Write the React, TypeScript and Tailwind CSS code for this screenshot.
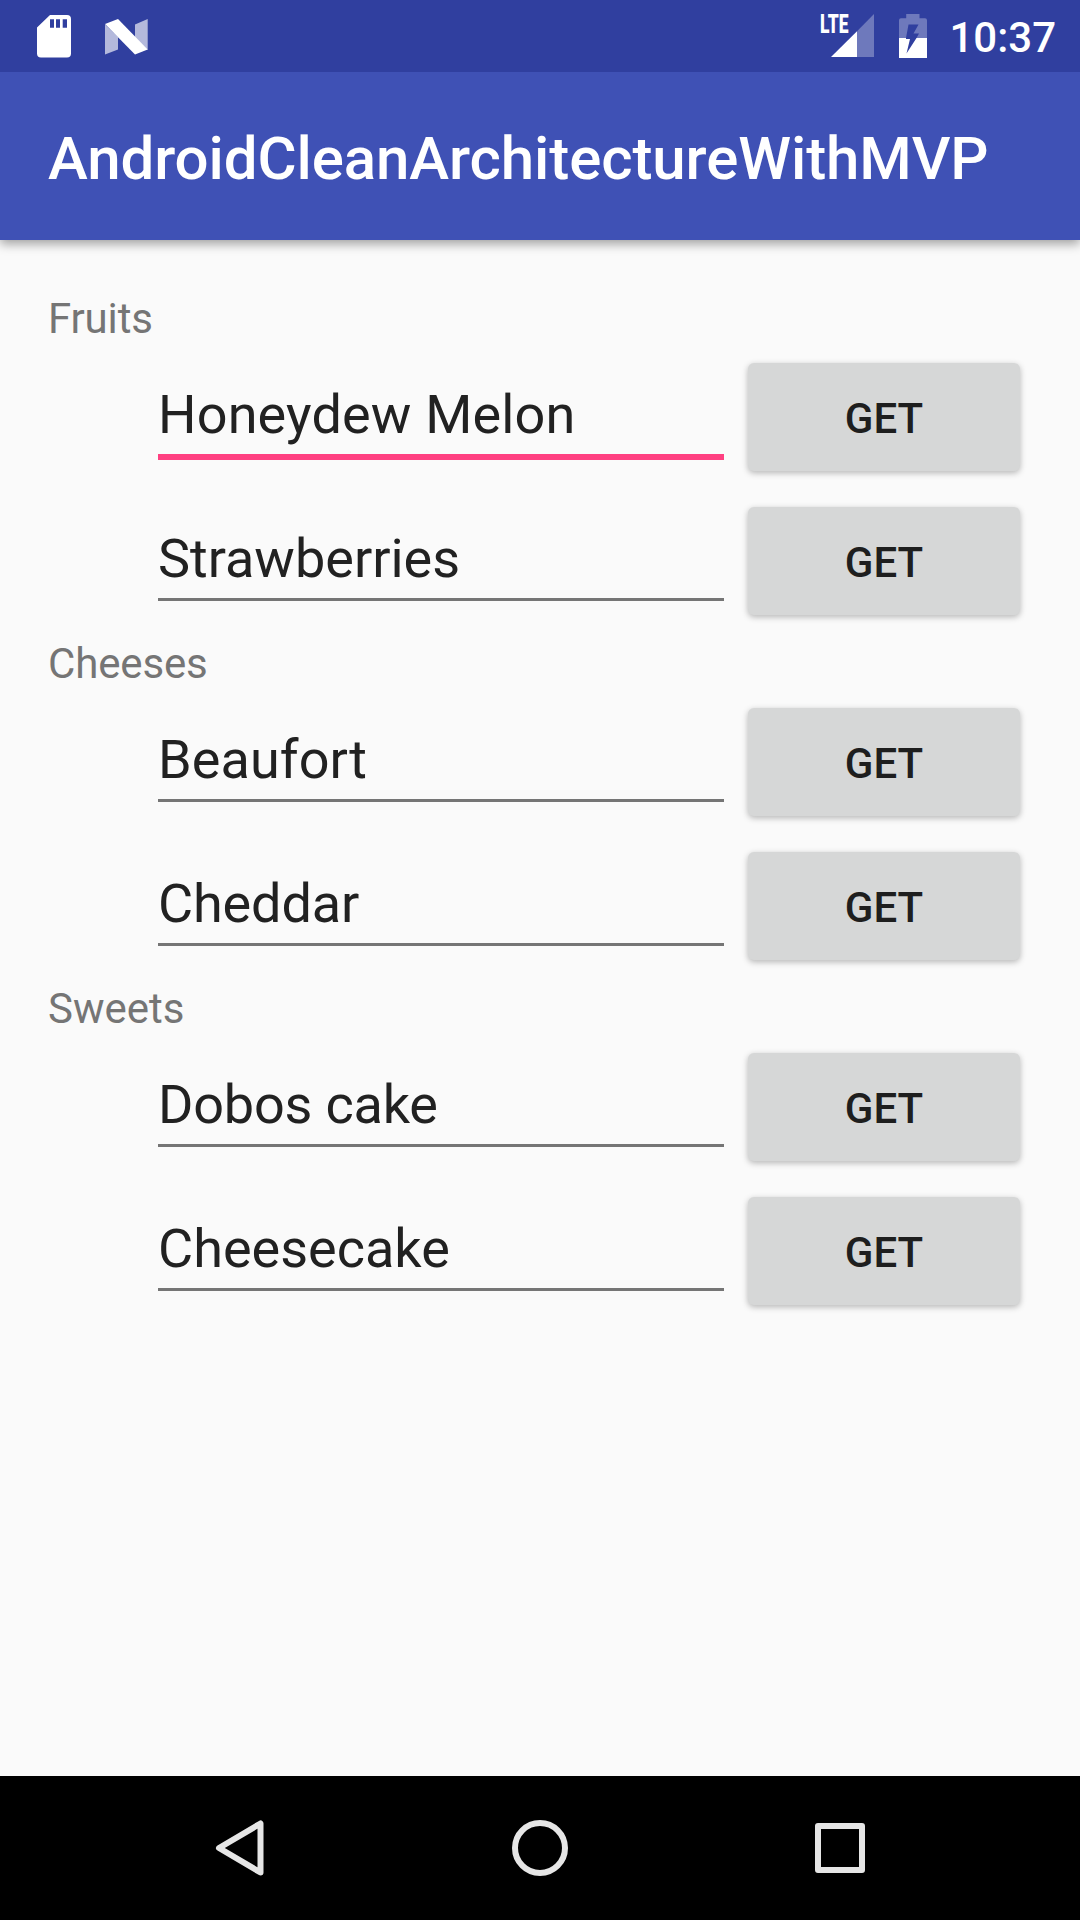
import React from "react";

type Entry = { value: string; focused?: boolean; tracking?: string };
type Section = { title: string; tracking?: string; entries: Entry[] };

const sections: Section[] = [
  {
    title: "Fruits",
    tracking: "tracking-[-0.15px]",
    entries: [{ value: "Honeydew Melon", focused: true, tracking: "tracking-[0.16px]" }, { value: "Strawberries" }],
  },
  {
    title: "Cheeses",
    tracking: "tracking-[-0.15px]",
    entries: [{ value: "Beaufort", tracking: "tracking-[0.1px]" }, { value: "Cheddar", tracking: "tracking-[-0.15px]" }],
  },
  {
    title: "Sweets",
    entries: [{ value: "Dobos cake", tracking: "tracking-[-0.2px]" }, { value: "Cheesecake" }],
  },
];

function SdCardIcon() {
  return (
    <svg width="34" height="43" viewBox="0 0 34 43" className="shrink-0">
      <path
        fill="#fff"
        fillRule="evenodd"
        d="M13 0H30a4 4 0 0 1 4 4V38.5a4 4 0 0 1-4 4H4a4 4 0 0 1-4-4V12.5ZM13 4.2V12.7H17V4.2ZM19 4.2V12.7H23V4.2ZM25.7 4.2V12.7H30V4.2Z"
      />
    </svg>
  );
}

function NougatIcon() {
  return (
    <svg width="43" height="36" viewBox="0 0 43 36" className="shrink-0">
      <path fill="#fff" fillOpacity="0.64" d="M0 5.5L13 18V30.5L0 35.5ZM30 5.5L42.7 0V31L30 19Z" />
      <path fill="#fff" d="M0 5L13 0L42.7 30.5L30 35.5Z" />
    </svg>
  );
}

function SignalIcon() {
  return (
    <div className="relative h-[43px] w-[53px] shrink-0">
      <svg width="53" height="43" viewBox="0 0 53 43">
        <path fill="#fff" fillOpacity="0.3" d="M36 17.2L53 0V43H36Z" />
        <path fill="#fff" d="M10 43L36 17.2V43Z" />
      </svg>
      <span className="absolute top-[1px] left-[-1px] origin-top-left scale-x-[0.67] text-[26px] leading-[19px] font-black">
        LTE
      </span>
    </div>
  );
}

function BatteryIcon() {
  return (
    <svg width="28" height="44" viewBox="0 0 28 44" className="shrink-0">
      <path
        fill="#fff"
        fillOpacity="0.3"
        d="M7.2 0H20.5V4.2H26a2 2 0 0 1 2 2V24H17.5L20 19.5H14.5L19.5 10.5H9.5L7 24H0V6.2a2 2 0 0 1 2-2H7.2Z"
      />
      <path fill="#fff" d="M0 24H7V25H11L7.5 39.5L17.5 24H28V44H0Z" />
    </svg>
  );
}

function EntryRow({ value, focused, tracking = "" }: Entry) {
  return (
    <div className="flex h-[144px] items-start pl-[110px]">
      <div className="mt-[37px] w-[566px]">
        <div className={`h-[72px] text-[54px] leading-[65px] text-[#212121] ${tracking}`}>{value}</div>
        {focused ? <div className="h-[6px] bg-[#ff4081]" /> : <div className="h-[3px] bg-[#757575]" />}
      </div>
      <button className="mt-[18px] ml-[24px] h-[108px] w-[272px] rounded-[6px] bg-[#d6d7d7] pt-[3px] text-[42px] leading-[48px] font-medium text-[#1e1e1e] shadow-[0_2px_6px_rgba(0,0,0,0.28)]">
        GET
      </button>
    </div>
  );
}

export default function App() {
  return (
    <div className="flex h-[1920px] w-[1080px] flex-col overflow-hidden bg-[#fafafa] font-[Roboto,sans-serif]">
      <header className="z-20 flex h-[72px] shrink-0 items-start bg-[#303f9f] text-white">
        <div className="flex items-start gap-[33.5px] pt-[15px] pl-[37px]">
          <SdCardIcon />
          <div className="pt-[3.5px]">
            <NougatIcon />
          </div>
        </div>
        <div className="ml-auto flex items-start pr-[24px]">
          <div className="pt-[14px]">
            <SignalIcon />
          </div>
          <div className="pt-[14px] pl-[25px]">
            <BatteryIcon />
          </div>
          <span className="pt-[3px] pl-[22px] text-[42px] leading-[69px] font-medium">10:37</span>
        </div>
      </header>
      <div className="z-10 flex h-[168px] shrink-0 items-center bg-[#3f51b5] pt-[5px] pl-[48px] text-[60px] leading-[70px] font-medium tracking-[-0.09px] text-white shadow-[0_4px_10px_rgba(0,0,0,0.36)]">
        AndroidCleanArchitectureWithMVP
      </div>
      <main className="flex-1 px-[48px] pt-[48px]">
        {sections.map((section) => (
          <section key={section.title}>
            <h2 className={`h-[57px] text-[42px] leading-[61px] text-[#757575] ${section.tracking ?? ""}`}>
              {section.title}
            </h2>
            {section.entries.map((entry) => (
              <EntryRow key={entry.value} {...entry} />
            ))}
          </section>
        ))}
      </main>
      <nav className="flex h-[144px] shrink-0 items-center justify-center gap-[244px] bg-black">
        <svg width="56" height="56" viewBox="0 0 56 56" fill="none" stroke="#e6e6e6" strokeWidth="6" strokeLinejoin="round">
          <path d="M48.5 3.5V52.5L7 28Z" />
        </svg>
        <svg width="56" height="56" viewBox="0 0 56 56" fill="none" stroke="#e6e6e6" strokeWidth="6">
          <circle cx="28" cy="28" r="25" />
        </svg>
        <svg width="56" height="56" viewBox="0 0 56 56" fill="none" stroke="#e6e6e6" strokeWidth="6" strokeLinejoin="round">
          <path d="M6 6H50V50H6Z" />
        </svg>
      </nav>
    </div>
  );
}
